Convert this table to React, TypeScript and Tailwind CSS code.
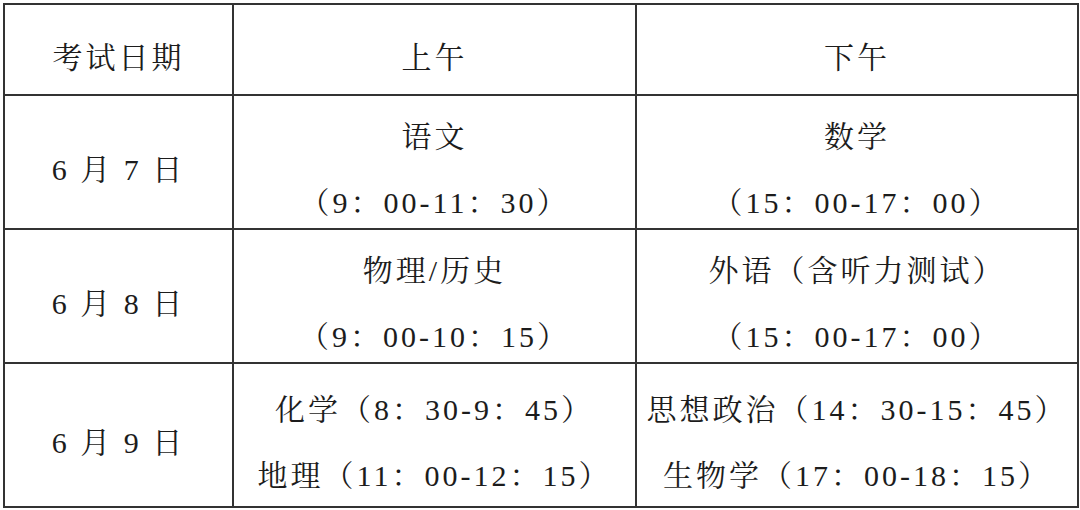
import React from "react";

type Row = { date: string; am: string[]; pm: string[] };

const rows: Row[] = [
  { date: "6 月 7 日", am: ["语文", "（9：00-11：30）"], pm: ["数学", "（15：00-17：00）"] },
  { date: "6 月 8 日", am: ["物理/历史", "（9：00-10：15）"], pm: ["外语（含听力测试）", "（15：00-17：00）"] },
  { date: "6 月 9 日", am: ["化学（8：30-9：45）", "地理（11：00-12：15）"], pm: ["思想政治（14：30-15：45）", "生物学（17：00-18：15）"] },
];

function Cell({ lines }: { lines: string[] }) {
  return (
    <td className="border-2 border-[#333] p-0 align-middle">
      <div className="flex flex-col items-center justify-center gap-[16px] pt-[16px]">
        {lines.map((l) => (
          <div key={l} className="leading-[50px] whitespace-nowrap">
            {l}
          </div>
        ))}
      </div>
    </td>
  );
}

export default function App() {
  return (
    <div className="w-[1080px] h-[510px] bg-white pt-[3px] pl-[3px]">
      <table className="border-collapse table-fixed w-[1074px] font-['Liberation_Serif','Noto_Serif_CJK_SC',serif] font-normal text-[30px] tracking-[3px] text-[#1c1c1c]">
        <colgroup>
          <col className="w-[229px]" />
          <col className="w-[403px]" />
          <col className="w-[442px]" />
        </colgroup>
        <tbody>
          <tr className="h-[91px]">
            <Cell lines={["考试日期"]} />
            <Cell lines={["上午"]} />
            <Cell lines={["下午"]} />
          </tr>
          {rows.map((r, i) => (
            <tr key={r.date} className={i === 2 ? "h-[144px]" : "h-[134px]"}>
              <Cell lines={[r.date]} />
              <Cell lines={r.am} />
              <Cell lines={r.pm} />
            </tr>
          ))}
        </tbody>
      </table>
    </div>
  );
}
